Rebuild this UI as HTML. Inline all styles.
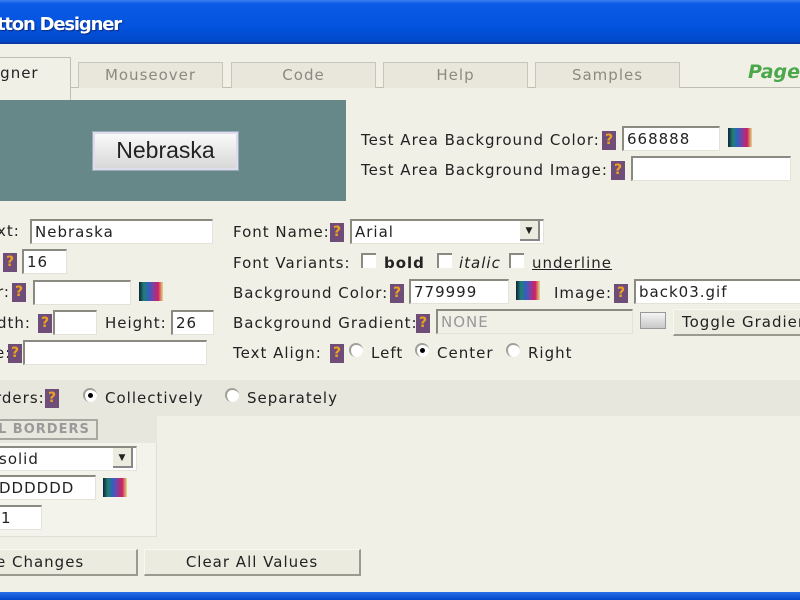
<!DOCTYPE html>
<html><head><meta charset="utf-8"><style>
*{box-sizing:border-box;margin:0;padding:0}
body{width:800px;height:600px;overflow:hidden;background:#f1f0e6;font-family:"DejaVu Sans",Verdana,sans-serif;font-size:15px;letter-spacing:1px;color:#222;position:relative}
.a{position:absolute;white-space:nowrap}
.title{left:0;top:0;width:800px;height:44px;background:linear-gradient(#3a7ef0 0,#0a5ae6 4px,#0454e0 60%,#0048c8 100%);border-bottom:2px solid #0a3aa8}
.tt{left:-3px;top:14px;color:#fff;font-weight:bold;font-size:18px;letter-spacing:-1.2px;text-shadow:1px 1px 1px #0a2a80}
.tab{height:26px;top:62px;border:1px solid #c8c6b8;border-bottom:none;background:#e9e7db;color:#8a8a80;text-align:center;line-height:24px;font-size:15px}
.line{left:0;top:87px;width:800px;height:1px;background:#c0beb0}
.q{width:14px;height:19px;background:#6e4d78;color:#f0a020;font-weight:bold;font-size:14px;text-align:center;line-height:19px;letter-spacing:0}
.in{height:25px;background:#fff;border-top:2px solid #8a8a80;border-left:2px solid #8a8a80;border-right:1px solid #e4e3da;border-bottom:1px solid #e4e3da;padding-left:3px;line-height:22px;font-size:15px}
.pk{width:24px;height:19px;background:linear-gradient(90deg,#102040,#208070,#3060c0,#8040a0,#d02060,#e0e080)}
.rb{width:14px;height:14px;border-radius:50%;background:#fff;border-top:2px solid #a0a098;border-left:2px solid #a0a098}
.rb.on::after{content:"";position:absolute;left:3px;top:3px;width:5px;height:5px;border-radius:50%;background:#000}
.cb{width:15px;height:15px;background:#fff;border-top:2px solid #8a8a80;border-left:2px solid #8a8a80}
.btn{height:27px;background:#ecebe0;border:1px solid #f8f8f0;border-right:2px solid #9a9a90;border-bottom:2px solid #9a9a90;text-align:center;line-height:24px}
.dd{width:20px;height:20px;background:#ecebe0;border-right:2px solid #888;border-bottom:2px solid #888;font-size:9px;text-align:center;line-height:20px;letter-spacing:0}
</style></head><body>
<div class="a title"></div>
<div class="a tt">tton Designer</div>

<div class="a line"></div>
<div class="a" style="left:0;top:57px;width:71px;height:44px;background:#f1f0e6;border:1px solid #c0beb0;border-left:none;border-bottom:none"></div>
<div class="a" style="left:-5px;top:64px;font-size:15px">igner</div>
<div class="a tab" style="left:78px;width:145px">Mouseover</div>
<div class="a tab" style="left:231px;width:145px">Code</div>
<div class="a tab" style="left:383px;width:145px">Help</div>
<div class="a tab" style="left:535px;width:145px">Samples</div>
<div class="a" style="left:748px;top:61px;color:#4aa84a;font-weight:bold;font-style:italic;font-size:19px;letter-spacing:0">PageT</div>

<div class="a" style="left:0;top:100px;width:346px;height:101px;background:#668888"></div>
<div class="a" style="left:93px;top:132px;width:145px;height:38px;background:linear-gradient(#fafafa,#d8d8d8);border:2px solid #dde;outline:1px solid #9ab"></div>
<div class="a" style="left:93px;top:137px;width:145px;text-align:center;font-family:'Liberation Sans',Arial,sans-serif;font-size:23px;letter-spacing:0;color:#222">Nebraska</div>

<div class="a" style="left:361px;top:131px">Test Area Background Color:</div>
<div class="a q" style="left:602px;top:131px">?</div>
<div class="a in" style="left:622px;top:126px;width:98px">668888</div>
<div class="a pk" style="left:728px;top:128px"></div>
<div class="a" style="left:361px;top:161px">Test Area Background Image:</div>
<div class="a q" style="left:611px;top:161px">?</div>
<div class="a in" style="left:631px;top:156px;width:160px"></div>

<div class="a" style="left:-3px;top:222px">xt:</div>
<div class="a in" style="left:30px;top:219px;width:183px">Nebraska</div>
<div class="a q" style="left:3px;top:253px">?</div>
<div class="a in" style="left:22px;top:249px;width:45px">16</div>
<div class="a" style="left:-3px;top:283px">r:</div>
<div class="a q" style="left:12px;top:283px">?</div>
<div class="a in" style="left:33px;top:280px;width:98px"></div>
<div class="a pk" style="left:139px;top:282px"></div>
<div class="a" style="left:-3px;top:314px">dth:</div>
<div class="a q" style="left:38px;top:314px">?</div>
<div class="a in" style="left:53px;top:310px;width:44px"></div>
<div class="a" style="left:105px;top:314px">Height:</div>
<div class="a in" style="left:171px;top:310px;width:43px">26</div>
<div class="a" style="left:-5px;top:344px">e:</div>
<div class="a q" style="left:8px;top:344px">?</div>
<div class="a in" style="left:23px;top:340px;width:184px"></div>

<div class="a" style="left:233px;top:223px">Font Name:</div>
<div class="a q" style="left:330px;top:223px">?</div>
<div class="a in" style="left:350px;top:219px;width:194px">Arial</div>
<div class="a dd" style="left:520px;top:221px">▼</div>
<div class="a" style="left:233px;top:254px">Font Variants:</div>
<div class="a cb" style="left:361px;top:253px"></div>
<div class="a" style="left:384px;top:254px;font-weight:bold">bold</div>
<div class="a cb" style="left:437px;top:253px"></div>
<div class="a" style="left:459px;top:254px;font-style:italic">italic</div>
<div class="a cb" style="left:509px;top:253px"></div>
<div class="a" style="left:532px;top:254px;text-decoration:underline">underline</div>
<div class="a" style="left:233px;top:284px">Background Color:</div>
<div class="a q" style="left:390px;top:284px">?</div>
<div class="a in" style="left:409px;top:279px;width:100px">779999</div>
<div class="a pk" style="left:516px;top:281px"></div>
<div class="a" style="left:554px;top:284px">Image:</div>
<div class="a q" style="left:614px;top:284px">?</div>
<div class="a in" style="left:634px;top:279px;width:170px">back03.gif</div>
<div class="a" style="left:233px;top:314px">Background Gradient:</div>
<div class="a q" style="left:416px;top:314px">?</div>
<div class="a in" style="left:436px;top:309px;width:197px;background:#f1f0e6;color:#999">NONE</div>
<div class="a" style="left:640px;top:312px;width:26px;height:17px;background:linear-gradient(#f4f4f4,#c8c8c8);border:1px solid #999"></div>
<div class="a btn" style="left:673px;top:309px;width:140px;text-align:left;padding-left:8px">Toggle Gradient</div>
<div class="a" style="left:233px;top:344px">Text Align:</div>
<div class="a q" style="left:330px;top:344px">?</div>
<div class="a rb" style="left:349px;top:343px"></div>
<div class="a" style="left:371px;top:344px">Left</div>
<div class="a rb on" style="left:415px;top:343px"></div>
<div class="a" style="left:437px;top:344px">Center</div>
<div class="a rb" style="left:506px;top:343px"></div>
<div class="a" style="left:528px;top:344px">Right</div>

<div class="a" style="left:0;top:380px;width:800px;height:36px;background:#e8e7dd"></div>
<div class="a" style="left:-5px;top:389px">rders:</div>
<div class="a q" style="left:45px;top:389px">?</div>
<div class="a rb on" style="left:83px;top:388px"></div>
<div class="a" style="left:105px;top:389px">Collectively</div>
<div class="a rb" style="left:225px;top:388px"></div>
<div class="a" style="left:247px;top:389px">Separately</div>

<div class="a" style="left:0;top:415px;width:157px;height:122px;background:#f4f3eb;border-right:1px solid #e0dfd4;border-bottom:1px solid #e0dfd4"></div>
<div class="a" style="left:0;top:415px;width:157px;height:28px;background:#e8e7dd"></div>
<div class="a" style="left:-2px;top:419px;width:100px;height:21px;border:2px solid #a8a8a0;border-left:none;color:#999;font-weight:bold;font-size:13px;line-height:17px;letter-spacing:1px">L BORDERS</div>
<div class="a in" style="left:-3px;top:446px;width:140px;padding-left:0">solid</div>
<div class="a dd" style="left:113px;top:448px">▼</div>
<div class="a in" style="left:-3px;top:475px;width:99px;padding-left:0">DDDDDD</div>
<div class="a pk" style="left:103px;top:478px"></div>
<div class="a in" style="left:-3px;top:505px;width:45px;padding-left:2px">1</div>

<div class="a btn" style="left:-10px;top:549px;width:148px"></div>
<div class="a" style="left:-4px;top:553px">e Changes</div>
<div class="a btn" style="left:144px;top:549px;width:217px">Clear All Values</div>

<div class="a" style="left:0;top:592px;width:800px;height:8px;background:linear-gradient(#2a70e8,#0048c8)"></div>
</body></html>
